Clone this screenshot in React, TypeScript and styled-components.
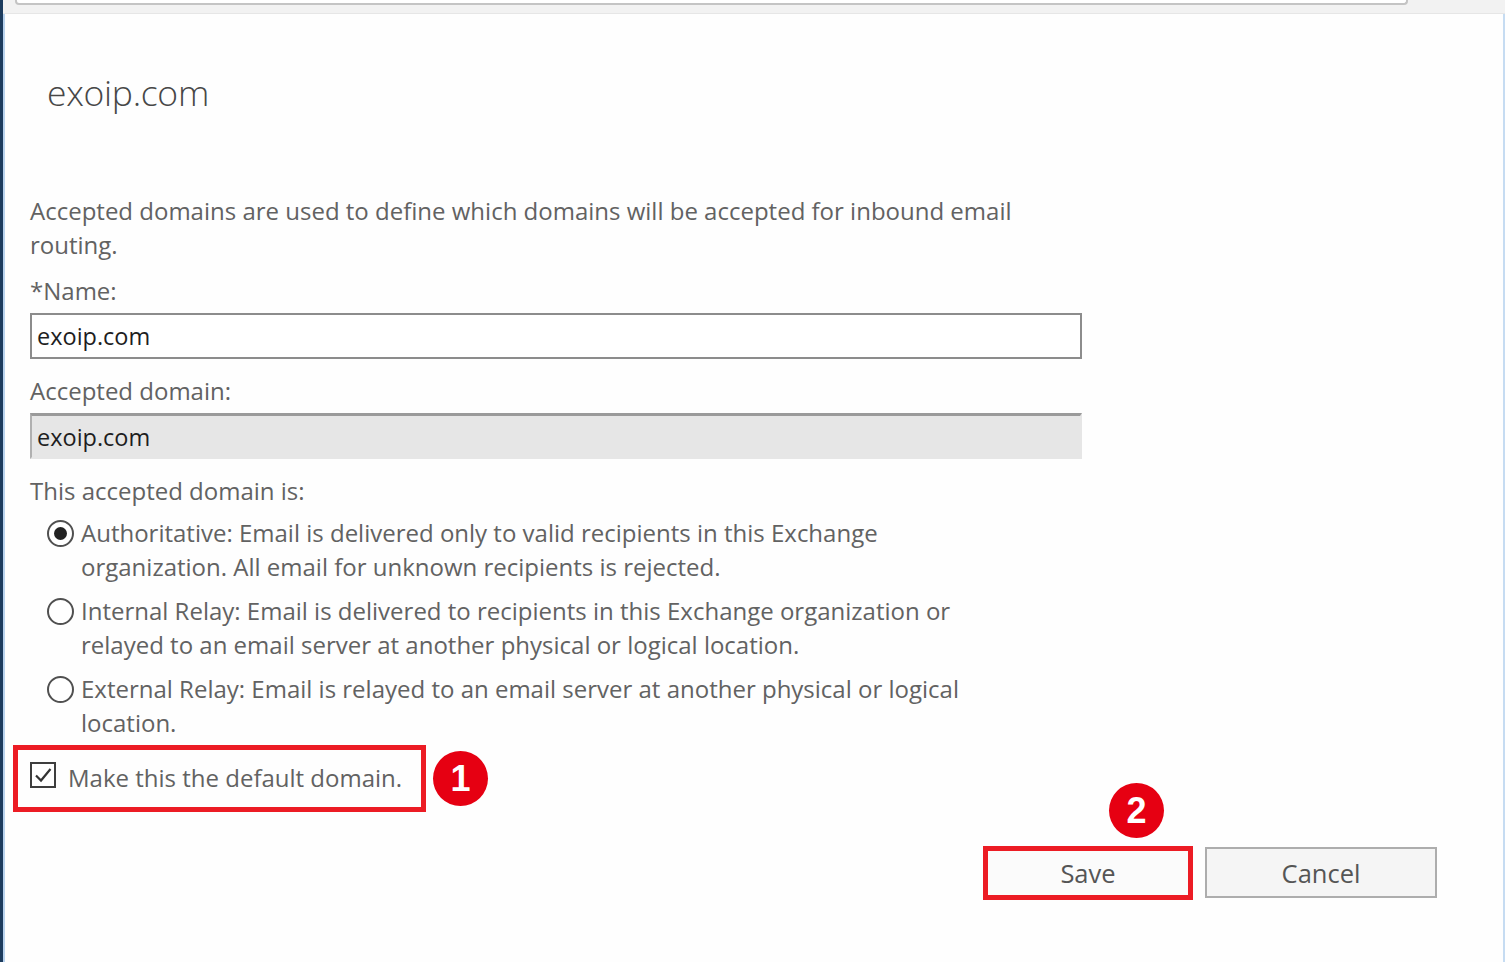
import React from "react";
import styled, { createGlobalStyle } from "styled-components";

const Global = createGlobalStyle`
  html, body { margin: 0; padding: 0; background: #ffffff; }
  body { font-family: "Open Sans", "Noto Sans", sans-serif; }
  * { box-sizing: border-box; }
`;

const Frame = styled.div`
  width: 1505px;
  height: 962px;
  display: flex;
  flex-direction: column;
  background: #fefefe;
  border-left: 3px solid #1d3c5e;
  box-shadow: inset 2px 0 0 #b9d3ee, inset -2px 0 0 #c6dcf2;
  overflow: hidden;
  color: #5a5a5a;
`;

const TopStrip = styled.div`
  height: 14px;
  background: #f2f2f2;
  border-bottom: 1px solid #e6e6e6;
  padding-left: 12px;
`;

const TopField = styled.div`
  width: 1393px;
  height: 5px;
  background: #ffffff;
  border: 2px solid #c4c4c4;
  border-top: none;
  border-radius: 0 0 4px 4px;
`;

const Title = styled.h1`
  margin: 54px 0 0 44px;
  font-size: 35.5px;
  font-weight: 300;
  line-height: 48px;
  color: #474747;
  letter-spacing: -0.3px;
`;

const Content = styled.div`
  padding: 78px 0 0 27px;
  display: flex;
  flex-direction: column;
  font-size: 24px;
  line-height: 34px;
`;

const Text = styled.div`
  width: 1010px;
  color: #626262;
`;

const Label = styled.div<{ $top?: number }>`
  margin-top: ${(p) => p.$top ?? 0}px;
  color: #626262;
`;

const Input = styled.div<{ $disabled?: boolean }>`
  width: 1052px;
  height: 46px;
  margin-top: 5px;
  padding: 0 5px;
  display: flex;
  align-items: center;
  font-size: 23.5px;
  color: #1e1e1e;
  background: ${(p) => (p.$disabled ? "#e6e6e6" : "#ffffff")};
  border: 2px solid ${(p) => (p.$disabled ? "#e6e6e6" : "#8c8c8c")};
  border-left-color: ${(p) => (p.$disabled ? "#b0b0b0" : "#8c8c8c")};
  border-top: ${(p) => (p.$disabled ? "3px solid #9a9a9a" : "2px solid #8c8c8c")};
`;

const RadioList = styled.div`
  display: flex;
  flex-direction: column;
  gap: 10px;
  margin-top: 8px;
  padding-left: 17px;
`;

const RadioRow = styled.div`
  display: flex;
  align-items: flex-start;
  gap: 7px;
`;

const RadioCircle = styled.span<{ $checked?: boolean }>`
  flex: none;
  width: 27px;
  height: 27px;
  margin-top: 4px;
  border-radius: 50%;
  border: 2px solid #505050;
  background: #ffffff;
  display: flex;
  align-items: center;
  justify-content: center;
  &::after {
    content: "";
    width: 13px;
    height: 13px;
    border-radius: 50%;
    background: ${(p) => (p.$checked ? "#222222" : "transparent")};
  }
`;

const RadioText = styled.div`
  width: 900px;
  color: #626262;
`;

const AnnotRow = styled.div`
  display: flex;
  align-items: center;
  gap: 7px;
  margin: 5px 0 0 -17px;
`;

const Highlight = styled.div`
  display: inline-flex;
  align-items: center;
  border: 5px solid #ec1c24;
`;

const CheckRow = styled.div`
  display: flex;
  align-items: center;
  gap: 12px;
  padding: 11px 19px 12px 12px;
  color: #626262;
`;

const CheckBox = styled.span`
  flex: none;
  width: 26px;
  height: 26px;
  border: 2px solid #3e3e3e;
  background: #ffffff;
  display: flex;
  align-items: center;
  justify-content: center;
  margin-top: -6px;
`;

const Badge = styled.span`
  flex: none;
  width: 55px;
  height: 55px;
  border-radius: 50%;
  background: #e60012;
  color: #ffffff;
  font-family: "Liberation Sans", Arial, sans-serif;
  font-weight: 700;
  font-size: 36px;
  line-height: 55px;
  text-align: center;
`;

const FloatingBadge = styled(Badge)`
  position: absolute;
  left: 126px;
  top: -63px;
`;

const Buttons = styled.div`
  display: flex;
  align-items: flex-start;
  gap: 12px;
  margin-top: 34px;
  padding-left: 953px;
`;

const SaveWrap = styled.div`
  position: relative;
`;

const Button = styled.button<{ $highlight?: boolean }>`
  width: ${(p) => (p.$highlight ? 210 : 232)}px;
  height: ${(p) => (p.$highlight ? 54 : 51)}px;
  border: ${(p) => (p.$highlight ? "5px solid #ec1c24" : "2px solid #adadad")};
  background: ${(p) => (p.$highlight ? "#fbfbfb" : "#f5f5f5")};
  font-family: "Open Sans", "Noto Sans", sans-serif;
  font-size: 25.5px;
  color: #555555;
  padding: 0;
  margin-top: ${(p) => (p.$highlight ? 0 : 1)}px;
`;

export default function App() {
  return (
    <>
      <Global />
      <Frame>
        <TopStrip>
          <TopField />
        </TopStrip>
        <Title>exoip.com</Title>
        <Content>
          <Text>
            Accepted domains are used to define which domains will be accepted for inbound email
            routing.
          </Text>
          <Label $top={12}>*Name:</Label>
          <Input>exoip.com</Input>
          <Label $top={15}>Accepted domain:</Label>
          <Input $disabled>exoip.com</Input>
          <Label $top={15}>This accepted domain is:</Label>
          <RadioList>
            <RadioRow>
              <RadioCircle $checked />
              <RadioText>
                Authoritative: Email is delivered only to valid recipients in this Exchange
                organization. All email for unknown recipients is rejected.
              </RadioText>
            </RadioRow>
            <RadioRow>
              <RadioCircle />
              <RadioText>
                Internal Relay: Email is delivered to recipients in this Exchange organization or
                relayed to an email server at another physical or logical location.
              </RadioText>
            </RadioRow>
            <RadioRow>
              <RadioCircle />
              <RadioText>
                External Relay: Email is relayed to an email server at another physical or logical
                location.
              </RadioText>
            </RadioRow>
          </RadioList>
          <AnnotRow>
            <Highlight>
              <CheckRow>
                <CheckBox>
                  <svg width="20" height="20" viewBox="0 0 20 20">
                    <path d="M3 10.5 L8 15.5 L17.5 4" fill="none" stroke="#333" strokeWidth="2.2" />
                  </svg>
                </CheckBox>
                <span>Make this the default domain.</span>
              </CheckRow>
            </Highlight>
            <Badge>1</Badge>
          </AnnotRow>
          <Buttons>
            <SaveWrap>
              <FloatingBadge>2</FloatingBadge>
              <Button $highlight>Save</Button>
            </SaveWrap>
            <Button>Cancel</Button>
          </Buttons>
        </Content>
      </Frame>
    </>
  );
}
